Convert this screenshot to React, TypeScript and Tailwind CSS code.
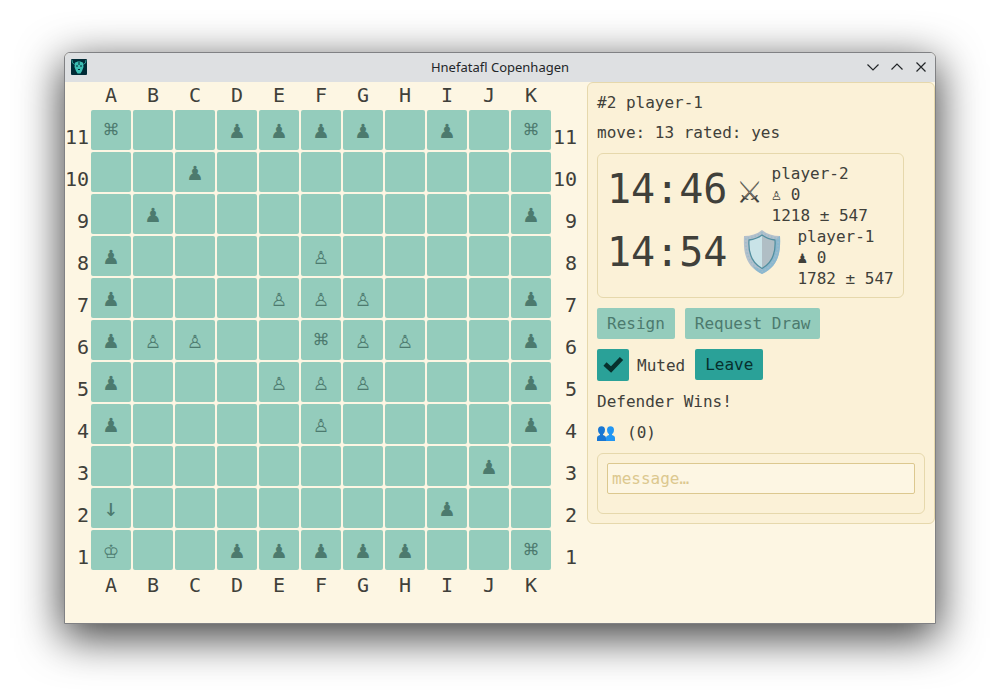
import { useState } from "react";

const COLUMNS = ["A", "B", "C", "D", "E", "F", "G", "H", "I", "J", "K"];

// a = attacker, d = defender, k = king, x = restricted square, v = last move
const BOARD = [
  "x..aaaa.a.x",
  "..a........",
  ".a........a",
  "a....d.....",
  "a...ddd...a",
  "add..xdd..a",
  "a...ddd...a",
  "a....d....a",
  ".........a.",
  "v.......a..",
  "k..aaaaa..x",
];

const PIECES: Record<string, string> = {
  a: "♟",
  d: "♙",
  k: "♔",
  x: "⌘",
  v: "↓",
  ".": "",
};

export default function App() {
  return (
    <div className="flex min-h-screen flex-col bg-white px-16 pt-[52px] pb-[76px]">
      <div className="flex flex-1 flex-col overflow-hidden rounded-t-md border border-[#808184] bg-[#fdf6e3] shadow-[0_12px_44px_2px_rgba(0,0,0,0.75)]">
        <TitleBar />
        <main className="flex flex-1 items-start font-['DejaVu_Sans_Mono',monospace] text-[#40403a]">
          <Board />
          <GamePanel />
        </main>
      </div>
    </div>
  );
}

function TitleBar() {
  return (
    <header className="flex h-[29px] items-center bg-[#dee0e2] px-1.5 pb-px font-['Noto_Sans',sans-serif] text-[13px] text-[#232629]">
      <div className="flex-1">
        <AppIcon />
      </div>
      <h1 className="pt-px">Hnefatafl Copenhagen</h1>
      <div className="flex flex-1 justify-end gap-2">
        <WindowButton label="Minimize" d="M2.500 5.500L8 11L13.500 5.500" />
        <WindowButton label="Maximize" d="M2.500 10.500L8 5L13.500 10.500" />
        <WindowButton label="Close" d="M3.500 3.500L12.500 12.500M12.500 3.500L3.500 12.500" />
      </div>
    </header>
  );
}

function WindowButton({ label, d }: { label: string; d: string }) {
  return (
    <button aria-label={label}>
      <svg viewBox="0 0 16 16" className="h-4 w-4">
        <path d={d} fill="none" stroke="#232629" strokeWidth="1.200" />
      </svg>
    </button>
  );
}

function Board() {
  return (
    <div className="flex text-xl leading-6">
      <RowLabels className="pr-0.5" />
      <div>
        <ColumnLabels />
        <div className="my-0.5 grid grid-cols-11 gap-0.5">
          {BOARD.flatMap((row, y) =>
            [...row].map((cell, x) => (
              <button
                key={`${x}-${y}`}
                disabled
                aria-label={`${COLUMNS[x]}${11 - y}`}
                className="flex h-10 w-10 items-center justify-center rounded-xs bg-[#94ccbc] text-2xl text-[#4c7a6e]"
              >
                {PIECES[cell]}
              </button>
            )),
          )}
        </div>
        <ColumnLabels />
      </div>
      <RowLabels className="pl-0.5" />
    </div>
  );
}

function ColumnLabels() {
  return (
    <div className="grid h-[26px] grid-cols-11 gap-0.5 pt-px text-center">
      {COLUMNS.map((c) => (
        <span key={c}>{c}</span>
      ))}
    </div>
  );
}

function RowLabels({ className }: { className: string }) {
  return (
    <div className={`flex w-[26px] flex-col pt-[35px] text-right ${className}`}>
      {BOARD.map((_, i) => (
        <span key={i} className="h-[42px] pt-2">
          {11 - i}
        </span>
      ))}
    </div>
  );
}

function GamePanel() {
  const [muted, setMuted] = useState(true);
  const [message, setMessage] = useState("");

  return (
    <section className="ml-2.5 flex-1 rounded-md border border-[#e6d8ac] bg-[#fbf1d7] p-[9px] text-base leading-[21px]">
      <p>#2 player-1</p>
      <p className="mt-[9px]">move: 13 rated: yes</p>

      <div className="mt-2.5 flex w-fit flex-col rounded-md border border-[#e6d8ac] p-[9px] pb-2">
        <Player time="14:46" icon={<Swords />} name="player-2" captured="♙ 0" rating="1218 ± 547" />
        <Player time="14:54" icon={<Shield />} name="player-1" captured="♟ 0" rating="1782 ± 547" />
      </div>

      <div className="mt-2.5 flex gap-2.5">
        <button disabled className="rounded-xs bg-[#94ccbc] px-2.5 py-[5px] text-[#4c7a6e]">
          Resign
        </button>
        <button disabled className="rounded-xs bg-[#94ccbc] px-2.5 py-[5px] text-[#4c7a6e]">
          Request Draw
        </button>
      </div>

      <div className="mt-2.5 flex items-start gap-2.5">
        <label className="flex items-center gap-2">
          <span className="relative flex h-8 w-8">
            <input
              type="checkbox"
              checked={muted}
              onChange={(e) => setMuted(e.target.checked)}
              className="h-8 w-8 appearance-none rounded-xs bg-[#2aa198]"
            />
            {muted && <CheckMark />}
          </span>
          Muted
        </label>
        <button className="rounded-xs bg-[#2aa198] px-2.5 py-[5px] text-[#07302d]">Leave</button>
      </div>

      <p className="mt-2.5">Defender Wins!</p>
      <p className="mt-2.5 flex items-center gap-3">
        <Spectators />
        (0)
      </p>

      <div className="mt-2.5 rounded-md border border-[#e6d8ac] p-[9px] pb-[19px]">
        <input
          type="text"
          aria-label="message"
          placeholder="message…"
          value={message}
          onChange={(e) => setMessage(e.target.value)}
          className="block w-full rounded-xs border border-[#dcc88f] bg-[#fdf6e3] px-1 py-1 outline-none placeholder:text-[#dcc88f]"
        />
      </div>
    </section>
  );
}

function Player({
  time,
  icon,
  name,
  captured,
  rating,
}: {
  time: string;
  icon: React.ReactNode;
  name: string;
  captured: string;
  rating: string;
}) {
  return (
    <div className="flex items-start">
      <span className="text-[40px] leading-[52px]">{time}</span>
      {icon}
      <div>
        <p>{name}</p>
        <p>{captured}</p>
        <p>{rating}</p>
      </div>
    </div>
  );
}

function Swords() {
  return <span className="mx-2.5 text-[40px] leading-[52px]">⚔</span>;
}

function Shield() {
  return (
    <svg viewBox="0 0 38 44" className="mt-1 mr-4 ml-4 h-11 w-[38px]">
      <path d="M19 0C14 4 8 6 1 6C0 25 4 37 19 44C34 37 38 25 37 6C30 6 24 4 19 0Z" fill="#b3c0cc" />
      <path d="M19 44C34 37 38 25 37 6L34 8L19 40L10 36C12 40 15 42 19 44Z" fill="#8bb8cf" />
      <path
        d="M19 2.500C14 6 9 8 3 8C2 24 7 35 19 41.500C31 35 36 24 35 8C29 8 24 6 19 2.500Z"
        fill="none"
        stroke="#9dbccb"
        strokeWidth="1.500"
        strokeDasharray="1.500 2"
      />
      <path
        d="M19 5C15 8 10 9.500 6 10C5 24 9 33 19 38.500C29 33 33 24 32 10C28 9.500 23 8 19 5Z"
        fill="#c9e3e8"
      />
      <path d="M19 5V38.500C29 33 33 24 32 10C28 9.500 23 8 19 5Z" fill="#b0bec5" />
      <path
        d="M19 5C15 8 10 9.500 6 10C5 24 9 33 19 38.500C29 33 33 24 32 10C28 9.500 23 8 19 5Z"
        fill="none"
        stroke="#528fa0"
        strokeWidth="1.300"
      />
    </svg>
  );
}

function CheckMark() {
  return (
    <svg viewBox="0 0 32 32" className="pointer-events-none absolute inset-0">
      <path d="M8 15L14 20.500L24.500 9.500" fill="none" stroke="#07302d" strokeWidth="4.600" />
    </svg>
  );
}

function Spectators() {
  return (
    <svg viewBox="0 0 18 16" className="h-4 w-[18px]">
      <path d="M1 4.500C1 0 8 0 8 4.500C8 8 6.500 9.500 4.500 9.500C2.500 9.500 1 8 1 4.500Z" fill="#1976d2" />
      <path d="M0 16V13C0 11 1.500 10.500 3 10V8H6V10C7.500 10.500 9 11 9 13V16Z" fill="#1976d2" />
      <path d="M10 4.500C10 0 17 0 17 4.500C17 8 15.500 9.500 13.500 9.500C11.500 9.500 10 8 10 4.500Z" fill="#2196f3" />
      <path d="M9 16V13C9 11 10.500 10.500 12 10V8H15V10C16.500 10.500 18 11 18 13V16Z" fill="#2196f3" />
    </svg>
  );
}

function AppIcon() {
  return (
    <svg viewBox="0 0 16 16" className="h-4 w-4">
      <rect width="16" height="16" rx="1" fill="#002b36" />
      <path d="M4 4C5 2 11 2 12 4L12.500 8L11 12L9.500 14.500H6.500L5 12L3.500 8Z" fill="#3cc0b4" />
      <path d="M1 1L1.500 4L4 5.500M15 1L14.500 4L12 5.500" fill="none" stroke="#2f9c95" />
      <path d="M5 7H7M9 7H11M7 10.500H9M8 3V6" stroke="#002b36" />
    </svg>
  );
}
